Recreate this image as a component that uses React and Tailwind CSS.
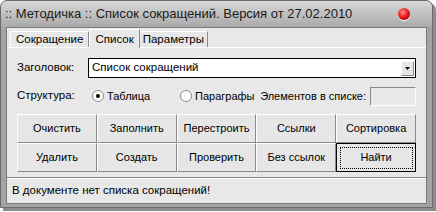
import React from 'react';

const font = { fontFamily: '"Liberation Sans", Arial, sans-serif' };

const Btn = ({ label, focused }) => (
    <div
        className={`flex-1 h-[29px] flex items-center justify-center bg-[#e6e6e6] text-[11px] text-black whitespace-nowrap ${focused
            ? 'border border-black'
            : 'border-t border-l border-t-white border-l-white border-r border-b border-r-[#8a8a8a] border-b-[#8a8a8a]'
            }`}
    >
        {focused ? (
            <div className="w-[73px] h-[22px] border border-dotted border-black flex items-center justify-center">
                {label}
            </div>
        ) : (
            label
        )}
    </div>
);

const Radio = ({ checked }) => (
    <span className="w-[12px] h-[12px] shrink-0 rounded-full bg-white border border-[#8d8d8d] flex items-center justify-center">
        {checked && <span className="w-[4px] h-[4px] rounded-full bg-black" />}
    </span>
);

export default function App() {
    return (
        <div className="w-[436px] h-[212px] bg-white" style={font}>
            <div className="w-[433px] h-[208px] rounded-t-[7px] border border-[#6a6a6a] bg-[#a4a4a4] flex flex-col shadow-[3px_3px_0_#8c8c8c]">
                {/* Title bar */}
                <div className="h-[26px] shrink-0 rounded-t-[6px] bg-gradient-to-b from-[#d9d9d9] to-[#a9a9a9] flex items-center justify-between pl-[4px] pr-[22px]">
                    <span className="text-[13px] text-[#1a1a1a] whitespace-nowrap">:: Методичка :: Список сокращений. Версия от 27.02.2010</span>
                    <span className="w-[12px] h-[12px] rounded-full bg-[radial-gradient(circle_at_40%_35%,#ff8a8a,#e01010_55%,#900000)] shadow-[0_1px_1px_#fff]" />
                </div>

                {/* Client area */}
                <div className="flex-1 mx-[5px] mb-[3px] bg-[#e8e8e8] border border-[#7a7a7a] flex flex-col">
                    {/* Tabs */}
                    <div className="flex items-end px-[2px] pt-[1px] h-[19px] text-[11.5px] text-black whitespace-nowrap">
                        <div className="h-[16px] px-[5px] flex items-center border-t border-l border-white border-r border-r-[#8a8a8a] ml-[1px]">Сокращение</div>
                        <div className="h-[19px] px-[5px] flex items-start pt-[1px] bg-[#e8e8e8] border-t border-l border-white border-r border-r-[#8a8a8a] relative top-[1px] z-10">Список</div>
                        <div className="h-[16px] px-[3px] flex items-center border-t border-white border-r border-r-[#8a8a8a]">Параметры</div>
                    </div>

                    {/* Panel */}
                    <div className="flex-1 border-t border-white border-b border-b-[#8a8a8a] px-[10px] pt-[10px] flex flex-col">
                        <div className="flex items-center h-[20px]">
                            <span className="w-[71px] text-[11.5px]">Заголовок:</span>
                            <div className="flex-1 h-[20px] bg-white border border-black flex items-center justify-between pl-[3px] pr-[1px] text-[11.5px]">
                                <span>Список сокращений</span>
                                <span className="w-[13px] h-[15px] bg-[#e6e6e6] border-t border-l border-white border-r border-b border-r-[#8a8a8a] border-b-[#8a8a8a] flex items-center justify-center">
                                    <svg width="5" height="3" viewBox="0 0 5 3"><path d="M0 0h5L2.5 3z" fill="#000" /></svg>
                                </span>
                            </div>
                        </div>

                        <div className="flex items-center h-[20px] mt-[8px] text-[11px] whitespace-nowrap">
                            <span className="w-[75px] text-[11.5px]">Структура:</span>
                            <Radio checked />
                            <span className="ml-[3px] w-[73px]">Таблица</span>
                            <Radio />
                            <span className="ml-[3px]">Параграфы</span>
                            <span className="ml-auto mr-[4px]">Элементов в списке:</span>
                            <div className="w-[46px] h-[19px] border border-[#8a8a8a] border-b-white border-r-white" />
                        </div>

                        <div className="mt-[8px] flex flex-col">
                            <div className="flex">
                                <Btn label="Очистить" />
                                <Btn label="Заполнить" />
                                <Btn label="Перестроить" />
                                <Btn label="Ссылки" />
                                <Btn label="Сортировка" />
                            </div>
                            <div className="flex">
                                <Btn label="Удалить" />
                                <Btn label="Создать" />
                                <Btn label="Проверить" />
                                <Btn label="Без ссылок" />
                                <Btn label="Найти" focused />
                            </div>
                        </div>
                    </div>

                    {/* Status bar */}
                    <div className="h-[25px] shrink-0 border-t border-white flex items-center pl-[5px] text-[11.5px] text-black">
                        В документе нет списка сокращений!
                    </div>
                </div>
            </div>
        </div>
    );
}
